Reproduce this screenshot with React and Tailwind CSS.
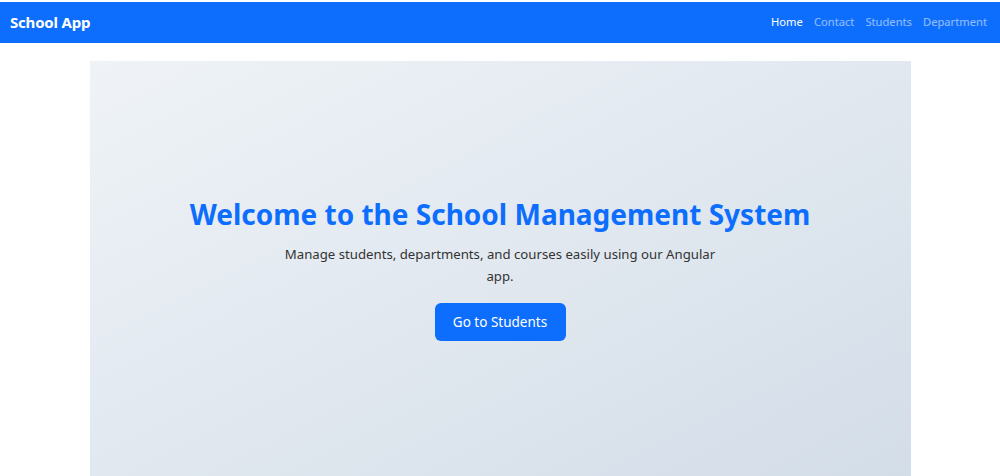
const links = ["Home", "Contact", "Students", "Department"];

const App = () => {
  return (
    <div className="min-h-screen bg-white pt-[2px] font-['Noto_Sans',sans-serif]">
      {/* Navbar */}
      <nav className="h-[41px] bg-[#0d6efd] flex items-center justify-between px-[10px]">
        <span className="text-white font-bold text-[15px] tracking-[-0.2px]">School App</span>
        <ul className="flex gap-[11px] pr-[3px]">
          {links.map((l, i) => (
            <li
              key={l}
              className={`text-[11.2px] ${i === 0 ? "text-white" : "text-white/55"}`}
            >
              {l}
            </li>
          ))}
        </ul>
      </nav>

      {/* Hero */}
      <div className="mt-[18px] mx-auto w-[821px] h-[420px] bg-gradient-to-br from-[#eff3f7] to-[#d3dde8] flex flex-col items-center justify-center text-center">
        <h1 className="text-[#0d6efd] font-bold text-[28px] leading-tight mb-[11px] mt-[-4px]">
          Welcome to the School Management System
        </h1>
        <p className="text-[#333] text-[13.2px] leading-[22px] max-w-[440px]">
          Manage students, departments, and courses easily using our Angular app.
        </p>
        <button className="mt-[16px] w-[131px] h-[38px] rounded-[6px] bg-[#0d6efd] text-white text-[13.5px]">
          Go to Students
        </button>
      </div>
    </div>
  );
};

export default App;
